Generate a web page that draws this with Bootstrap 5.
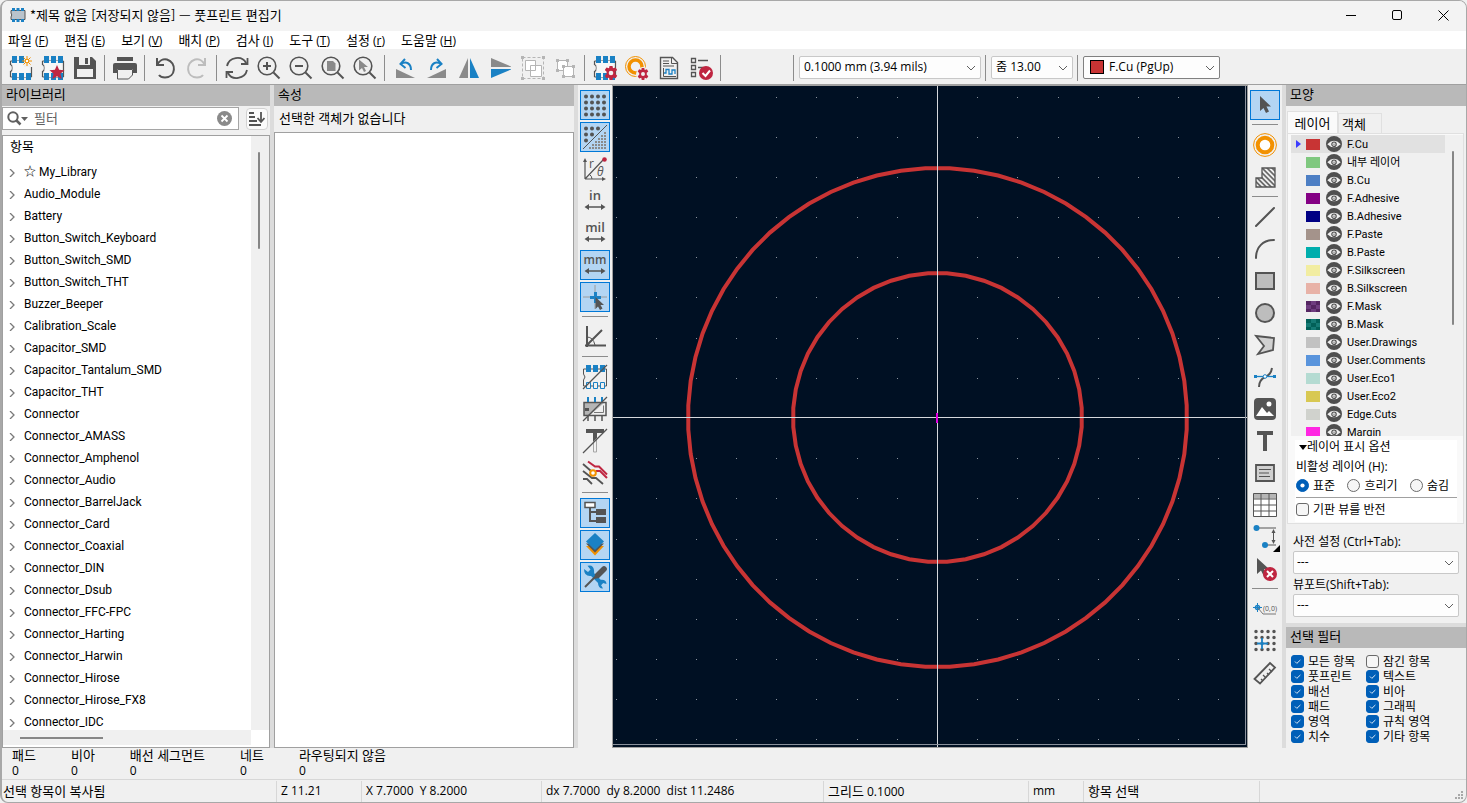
<!DOCTYPE html>
<html lang="ko">
<head>
<meta charset="utf-8">
<meta name="viewport" content="width=device-width, initial-scale=1">
<title>풋프린트 편집기</title>
<link href="https://cdn.jsdelivr.net/npm/bootstrap@5.3.0/dist/css/bootstrap.min.css" rel="stylesheet">
<style>
:root{--ui:"Open Sans","Noto Sans CJK KR",sans-serif;--narrow:Roboto,"Noto Sans CJK KR",sans-serif}
body{font:12px/18px var(--ui);color:#000;background:#f0f0f0}
.ko{font-size:13px}
.app-window{height:100vh;border:1px solid #a8a8a8;border-radius:8px;overflow:hidden;background:#f0f0f0;border-width:1px 1px 1px 2px}
.titlebar{height:30px;background:#f3f3f3;padding:0 0 2px 8px}
.titlebar h1{font:13px/20px "Noto Sans CJK KR",sans-serif;margin:0}
.win-btn{width:46px;height:28px;border:0;background:none;padding:0;line-height:0}
.menubar{height:18px;background:#fff;padding-left:6px;gap:16px}
.menubar .nav-link{padding:0;color:#000;font-size:12px;line-height:18px}
.menubar .nav-link u{text-underline-offset:1px}
svg.ic{width:24px;height:24px;display:block;overflow:visible}
.toolbar{height:36px;padding:2px 4px 0;gap:2px;border-bottom:1px solid #a0a0a0}
.tool{width:30px;height:30px;padding:2px;border:1px solid transparent;border-radius:0;flex:none;background:none}
.tool.active{background:#b3d5f3;border-color:#0078d7}
.vr-sep{width:6px;height:26px;flex:none;background:linear-gradient(#8c8c8c,#8c8c8c) 2px 0/1px 100% no-repeat}
.hr-sep{width:26px;height:6px;flex:none;margin:0 2px;background:linear-gradient(#8c8c8c,#8c8c8c) 0 2px/100% 1px no-repeat}
.tool-gap{max-width:63px}
.form-select.pick{font-family:var(--ui);font-size:12px;line-height:18px;height:23px;padding:0 22px 1px 4px;color:#000;background-color:#fdfdfd;border:1px solid #c8c8c8;border-radius:2px;background-position:right 4px center;background-size:10px 10px;background-image:url("data:image/svg+xml,%3csvg xmlns='http://www.w3.org/2000/svg' viewBox='0 0 10 10'%3e%3cpath fill='none' stroke='%23606060' d='M1 3l4 4 4-4'/%3e%3c/svg%3e")}
.form-select.pick-grid{width:182px}.form-select.pick-zoom{width:82px}
.form-select.pick-layer{width:137px;border-color:#808080;padding-left:25px}
.pick-swatch{position:absolute;left:7px;top:4px;width:14px;height:14px;background:#c83434;border:1px solid #000;pointer-events:none}
.panel-head{height:21px;background:#b9b9b9;font-size:13px;line-height:19px;padding-left:4px;margin:0;font-weight:400;flex:none}
.workspace{background:#f0f0f0;min-height:0}
.gutter{width:4px;background:#dcdcdc;flex:none}
.lib-panel{width:268px;flex:none}
.prop-panel{width:300px;flex:none}
.search-row{padding:1px 2px 5px 0;gap:7px}
.search-box{height:23px;border:1px solid #a5a5a5;background:#fff;padding:0 6px 0 4px}
.search-box input{border:0;outline:0;padding:0 0 2px 6px;font-size:13px;line-height:18px;min-width:0;background:none}
.search-box input::placeholder{color:#606060;opacity:1}
.clear-btn,.sort-btn{border:0;background:none;padding:0;line-height:0}
.sort-btn{width:22px;height:22px;background:#fbfbfb;border:1px solid #d2d2d2;border-radius:4px;padding:2px}
.tree{border:1px solid #a0a0a0;background:#fff;min-height:0;font-family:var(--narrow)}
.tree-title{padding:2px 0 5px 7px}
.tree ul{margin:0;padding:0;list-style:none}
.tree li{height:22px;line-height:22px;padding-left:6px}
.tree li svg{width:6px;height:8px;margin-right:9px}
.v-track{width:18px;background:#f0f0f0;padding:16px 0 0 7px;flex:none}
.v-thumb{width:2px;background:#868686;border-radius:1px}
.h-track{height:15px;background:#f0f0f0;padding:7px 0 0 17px;margin:0 18px 2px 0}
.h-thumb{width:83px;height:2px;background:#868686}
.prop-body{border:1px solid #a0a0a0;background:#fff}
.side-tools{width:34px;padding:5px 2px 0;gap:2px;flex:none;overflow:hidden}
.board{background:#001023;border:1px solid #a0a0a0;min-width:0}
.board>svg{position:absolute;inset:0;width:100%;height:100%}
.board::after{content:"";position:absolute;inset:0 1px 2px 0;border:1px solid #8a919c;border-width:0 1px 1px 0}
.app-panel{width:180px;flex:none}
.tabs-row{padding:6px 0 0 1px;height:27px}
.tabs-row .nav-link{border:1px solid #e0e0e0;border-bottom:0;border-radius:0;background:#f0f0f0;color:#000;font-size:13px;line-height:18px;padding:0 12px 0 0;width:44px;height:20px;margin-top:1px}
.tabs-row .nav-link.active{width:51px;height:22px;background:#fafafa;margin:-1px 0 0;padding:0}
.tab-page{border:1px solid #e0e0e0;margin:0 2px 0 1px;padding:1px 0 1px 3px;background:#f9f9f9}
.layer-list{height:301px;overflow:hidden;background:#f0f0f0;margin:0 0 4px 0;font:11px/17px var(--narrow)}
.layer-row{height:18px;padding-left:15px;gap:6px;position:relative}
.layer-row.current{background:#e1e1e1}
.layer-row.current::before{content:"";position:absolute;left:5px;top:5px;border:4px solid transparent;border-left:5px solid #3c3cff;border-right:0}
.swatch{width:14px;height:11px;flex:none;background:var(--c)}
.swatch.check{background:repeating-conic-gradient(var(--c) 0 25%,var(--d) 0 50%) 0 0/10px 8px}
.layer-row svg{width:16px;height:16px;flex:none}
.layer-row .txt{margin-left:-1px}
.opts{background:#fff;margin:0 6px 0 4px;padding:0 0 1px 1px}
.opts .line{height:1px;background:#a0a0a0;margin:4px 0 0}
.fold{line-height:14px;padding:0 0 2px 3px}
.form-check.mini{min-height:0;padding:0;margin:0;display:flex;align-items:center;gap:4px;line-height:15px}
.mini .form-check-input{float:none;margin:0;width:13px;height:13px;border-color:#6a6a6a;background-color:#f6f6f6;flex:none}
.mini .form-check-input[type=checkbox]{border-radius:3px}
.mini .form-check-input:checked{background-color:#005fb8;border-color:#005fb8}
.mini .form-check-input[type=checkbox]:checked{background-image:url("data:image/svg+xml,%3csvg xmlns='http://www.w3.org/2000/svg' viewBox='0 0 13 13'%3e%3cpath fill='none' stroke='%23fff' d='M3.5 6.5l2.2 2.2 4.2-4'/%3e%3c/svg%3e")}
.mini .form-check-input[type=radio]:checked{background-image:url("data:image/svg+xml,%3csvg xmlns='http://www.w3.org/2000/svg' viewBox='0 0 13 13'%3e%3ccircle cx='6.5' cy='6.5' r='2.5' fill='%23fff'/%3e%3c/svg%3e")}
.presets{padding:9px 7px 6px}
.presets .form-select{padding-left:3px}
.presets label{display:block;line-height:18px}
.presets label+select+label{padding-top:2px}
.strip{height:4px;background:#dcdcdc}
.filters{display:grid;grid-template-columns:75px 1fr;padding:6px 0 0 5px}
.counts{height:31px;padding:0 0 0 10px;gap:35px;line-height:15px}
.counts dd,.counts dt{margin:0;font-weight:400}
.counts dt{font-size:13px}
.statusbar{height:23px;border-top:1px solid #d7d7d7;padding-top:1px;line-height:20px}
.statusbar>div{border-left:1px solid #d7d7d7;padding-left:4px;white-space:pre;overflow:hidden}
.statusbar>div:first-child{border:0;padding-left:1px}
</style>
</head>
<body>
<svg width="0" height="0" class="position-absolute" aria-hidden="true">
<defs>
<symbol id="fp" viewBox="0 0 24 24"><path d="M1.5 5v3.500q2 .8 2 3.500t-2 3.500V21M22.500 5v16M1.500 5h21M1.500 21h21" fill="none" stroke="#545454" stroke-width="1.200"/><path d="M3.500 5h17v16h-17z" fill="#f7f7f7"/><path d="M3 0h5v7H3zM10 0h5v7h-5zM17 0h5v7h-5zM3 17h5v7H3zM10 17h5v7h-5zM17 17h5v7h-5z" fill="#1a81c4"/></symbol>
<symbol id="gear" viewBox="0 0 14 14"><path d="M5.500 0h3l.5 2.300 2.500-.9 1.700 2.600-1.800 1.600V8l1.800 1.700-1.700 2.600-2.500-.8-.5 2.500h-3L5 11.500l-2.500.8L.8 9.700 2.600 8V5.700L.8 4l1.700-2.600 2.500.9z" fill="#bf2641"/><circle cx="7" cy="7" r="2.300" fill="#f0f0f0"/></symbol>
<symbol id="eye" viewBox="0 0 16 16"><circle cx="8" cy="8" r="8" fill="#4f4f4f"/><path d="M1.300 8.200Q8 1.500 14.700 8.200 8 14.500 1.300 8.200z" fill="#f0f0f0"/><circle cx="8" cy="8.200" r="2.200" fill="#f0f0f0" stroke="#4f4f4f" stroke-width="1.200"/><circle cx="8" cy="8.200" r=".6" fill="#4f4f4f"/></symbol>
<symbol id="lens" viewBox="0 0 24 24"><circle cx="10" cy="10" r="8.800" fill="none" stroke="#545454" stroke-width="1.600"/><path d="M16.500 16.500l6 6" stroke="#545454" stroke-width="2"/></symbol>
<symbol id="arrows" viewBox="0 0 24 6"><path d="M4 3h16" stroke="#545454" stroke-width="1.500"/><path d="M6 0v6L1.500 3zM18 0v6l4.500-3z" fill="#545454"/></symbol>
<pattern id="hatch" width="3.500" height="3.500" patternUnits="userSpaceOnUse" patternTransform="rotate(-45)"><path d="M.8 0v4" stroke="#545454" stroke-width="1.500"/></pattern>
</defs>
</svg>

<div class="app-window d-flex flex-column">
<header class="titlebar d-flex align-items-center flex-shrink-0">
  <svg width="16" height="14" viewBox="0 0 16 14"><path d="M1 2.500h14v9H1V9q1.500-2 0-4z" fill="#b9c3cc" stroke="#545454"/><path d="M2 0h3v3H2zM6.500 0h3v3h-3zM11 0h3v3h-3zM2 11h3v3H2zM6.500 11h3v3h-3zM11 11h3v3h-3z" fill="#1a81c4"/></svg>
  <h1 class="ms-1">*제목 없음 [저장되지 않음] — 풋프린트 편집기</h1>
  <div class="ms-auto d-flex">
    <button class="win-btn" aria-label="최소화"><svg width="11" height="11"><path d="M0 5.500h10" stroke="#000"/></svg></button>
    <button class="win-btn" aria-label="최대화"><svg width="11" height="11"><rect x=".5" y=".5" width="9" height="9" rx="1.500" fill="none" stroke="#000"/></svg></button>
    <button class="win-btn" aria-label="닫기"><svg width="11" height="11"><path d="M.5.5l10 10M10.500.5l-10 10" stroke="#000"/></svg></button>
  </div>
</header>
<nav class="menubar nav flex-nowrap flex-shrink-0">
  <a class="nav-link" href="#"><span class="ko">파일</span> (<u>F</u>)</a><a class="nav-link" href="#"><span class="ko">편집</span> (<u>E</u>)</a><a class="nav-link" href="#"><span class="ko">보기</span> (<u>V</u>)</a><a class="nav-link" href="#"><span class="ko">배치</span> (<u>P</u>)</a><a class="nav-link" href="#"><span class="ko">검사</span> (<u>I</u>)</a><a class="nav-link" href="#"><span class="ko">도구</span> (<u>T</u>)</a><a class="nav-link" href="#"><span class="ko">설정</span> (<u>r</u>)</a><a class="nav-link" href="#"><span class="ko">도움말</span> (<u>H</u>)</a>
</nav>

<div class="toolbar d-flex align-items-center flex-shrink-0" role="toolbar">
  <button class="btn tool" aria-label="새 풋프린트"><svg class="ic" viewBox="0 0 24 24"><use href="#fp"/><path d="M15 0h9v11h-9z" fill="#f0f0f0"/><path d="M18 0v10M13 5h10M14.500 1.500l7 7M21.500 1.500l-7 7" stroke="#f29100"/><circle cx="18" cy="5" r="1.800" fill="#fff" stroke="#f29100"/></svg></button>
  <button class="btn tool" aria-label="풋프린트 마법사"><svg class="ic" viewBox="0 0 24 24"><use href="#fp"/><path d="M16 9l2.100 4.800 5.400.5-4.100 3.500 1.300 5.200-4.700-2.800-4.700 2.800 1.300-5.200-4.100-3.500 5.400-.5z" fill="#bf2641"/></svg></button>
  <button class="btn tool" aria-label="저장"><svg class="ic" viewBox="0 0 24 24"><path d="M1 1h18l4 4v18H1z" fill="#545454"/><path d="M6 1h11v8H6zM4 13h16v8H4z" fill="#f0f0f0"/><path d="M12 2h3v6h-3z" fill="#545454"/></svg></button>
  <i class="vr-sep"></i>
  <button class="btn tool" aria-label="인쇄"><svg class="ic" viewBox="0 0 24 24"><path d="M4 1h16v4H4zM2 7h20q2 0 2 2v8h-4v-4H4v4H0V9q0-2 2-2z" fill="#545454"/><path d="M4.500 13.500h15V19l-4 4h-11z" fill="#f0f0f0" stroke="#545454"/></svg></button>
  <i class="vr-sep"></i>
  <button class="btn tool" aria-label="실행 취소"><svg class="ic" viewBox="0 0 24 24"><path d="M4 2v7h7M4 9C6 5 10 2.500 14 3.500c10 3 9 18-2 18-3 0-5-1-6-2.500" fill="none" stroke="#545454" stroke-width="2"/></svg></button>
  <button class="btn tool" aria-label="다시 실행"><svg class="ic" viewBox="0 0 24 24"><path d="M20 2v7h-7M20 9C18 5 14 2.500 10 3.500c-10 3-9 18 2 18 3 0 5-1 6-2.500" fill="none" stroke="#bdbdbd" stroke-width="2"/></svg></button>
  <i class="vr-sep"></i>
  <button class="btn tool" aria-label="새로 고침"><svg class="ic" viewBox="0 0 24 24"><path d="M2 10C4 1 17-1 21 7M22.500 2v6H16M22 14c-2 9-15 11-19 3M1.500 22v-6H8" fill="none" stroke="#545454" stroke-width="1.800"/></svg></button>
  <button class="btn tool" aria-label="확대"><svg class="ic" viewBox="0 0 24 24"><use href="#lens"/><path d="M10 6v8M6 10h8" stroke="#545454" stroke-width="2"/></svg></button>
  <button class="btn tool" aria-label="축소"><svg class="ic" viewBox="0 0 24 24"><use href="#lens"/><path d="M6 10h8" stroke="#545454" stroke-width="2"/></svg></button>
  <button class="btn tool" aria-label="맞춤 확대"><svg class="ic" viewBox="0 0 24 24"><use href="#lens"/><path d="M6 5h6l2.500 2.500V15H6z" fill="#8a8a8a"/></svg></button>
  <button class="btn tool" aria-label="선택 영역 확대"><svg class="ic" viewBox="0 0 24 24"><use href="#lens"/><path d="M6 3.500v11l3-2.500 2 4 2-1-2-4h4z" fill="#8a8a8a"/></svg></button>
  <i class="vr-sep"></i>
  <button class="btn tool" aria-label="반시계 방향 회전"><svg class="ic" viewBox="0 0 24 24"><path d="M3 13v9h19z" fill="#8a8a8a"/><path d="M8 8c5-3 10-1 10 6" fill="none" stroke="#1a81c4" stroke-width="2"/><path d="M12 3L7.500 8l5 4" fill="none" stroke="#1a81c4" stroke-width="2"/></svg></button>
  <button class="btn tool" aria-label="시계 방향 회전"><svg class="ic" viewBox="0 0 24 24"><path d="M21 13v9H2z" fill="#8a8a8a"/><path d="M16 8c-5-3-10-1-10 6" fill="none" stroke="#1a81c4" stroke-width="2"/><path d="M12 3l4.500 5-5 4" fill="none" stroke="#1a81c4" stroke-width="2"/></svg></button>
  <button class="btn tool" aria-label="수평 뒤집기"><svg class="ic" viewBox="0 0 24 24"><path d="M11 2v20H2z" fill="#8a8a8a"/><path d="M13 2v20h9z" fill="#1a81c4"/></svg></button>
  <button class="btn tool" aria-label="수직 뒤집기"><svg class="ic" viewBox="0 0 24 24"><path d="M2 2l20 8.500v.5H2z" fill="#8a8a8a"/><path d="M2 22l20-8.500V13H2z" fill="#1a81c4"/></svg></button>
  <button class="btn tool" aria-label="그룹"><svg class="ic" viewBox="0 0 24 24"><rect x="1.500" y="1.500" width="21" height="21" fill="none" stroke="#b5b5b5" stroke-dasharray="3 2"/><path d="M0 0h3v3H0zM21 0h3v3h-3zM0 21h3v3H0zM21 21h3v3h-3z" fill="#b5b5b5"/><path d="M4.500 4.500h10v10h-10zM9.500 9.500h11v11h-11z" fill="#fff" stroke="#b5b5b5"/></svg></button>
  <button class="btn tool" aria-label="그룹 해제"><svg class="ic" viewBox="0 0 24 24"><path d="M4.500 4.500h10v10h-10z" fill="#fff" stroke="#b5b5b5"/><path d="M10.500 10.500h10v10h-10z" fill="#fff" stroke="#b5b5b5"/><path d="M3 3h3v3H3zM13 3h3v3h-3zM3 13h3v3H3zM9 9h3v3H9zM19 9h3v3h-3zM9 19h3v3H9zM19 19h3v3h-3z" fill="#b5b5b5"/></svg></button>
  <i class="vr-sep"></i>
  <button class="btn tool" aria-label="풋프린트 속성"><svg class="ic" viewBox="0 0 24 24"><use href="#fp"/><use href="#gear" x="11" y="10" width="14" height="14"/></svg></button>
  <button class="btn tool" aria-label="기본 패드 속성"><svg class="ic" viewBox="0 0 24 24"><circle cx="10.500" cy="10.500" r="10" fill="none" stroke="#f29100"/><circle cx="10.500" cy="10.500" r="6.500" fill="none" stroke="#f29100" stroke-width="3.500"/><circle cx="18" cy="18" r="7" fill="#f0f0f0"/><use href="#gear" x="12" y="12" width="12" height="12"/></svg></button>
  <button class="btn tool" aria-label="데이터시트"><svg class="ic" viewBox="0 0 24 24"><path d="M3.500 1.500h12l5 5v16h-17z" fill="none" stroke="#545454" stroke-width="1.400"/><path d="M14.500 1.500v6h6M6 5h6M6 7.500h6M6 10h11" fill="none" stroke="#545454"/><path d="M6.500 12v8.500H19" fill="none" stroke="#545454"/><path d="M7 17h2v-3.500h3V18h3v-4h3v4" fill="none" stroke="#1a81c4" stroke-width="1.300"/></svg></button>
  <button class="btn tool" aria-label="풋프린트 검사기"><svg class="ic" viewBox="0 0 24 24"><path d="M2.500 2.500h4v4h-4zM2.500 9.500h4v4h-4zM2.500 16.500h4v4h-4zM9 4.500h10M9 11.500h5" fill="none" stroke="#545454" stroke-width="1.300"/><circle cx="17" cy="17" r="7" fill="#bf2641"/><path d="M13.500 17l3 3 4.500-5.500" fill="none" stroke="#fff" stroke-width="2"/></svg></button>
  <i class="vr-sep"></i>
  <i class="tool-gap flex-grow-1"></i>
  <i class="vr-sep"></i>
  <select class="form-select pick pick-grid" aria-label="그리드"><option>0.1000 mm (3.94 mils)</option></select>
  <i class="vr-sep"></i>
  <select class="form-select pick pick-zoom" aria-label="줌"><option>줌 13.00</option></select>
  <i class="vr-sep"></i>
  <div class="position-relative"><select class="form-select pick pick-layer" aria-label="레이어"><option>F.Cu (PgUp)</option></select><span class="pick-swatch"></span></div>
</div>

<main class="workspace d-flex flex-grow-1">
  <section class="lib-panel d-flex flex-column">
    <h2 class="panel-head">라이브러리</h2>
    <div class="search-row d-flex align-items-center flex-shrink-0">
      <div class="search-box d-flex align-items-center flex-grow-1">
        <svg width="21" height="16" viewBox="0 0 21 16"><circle cx="6" cy="6" r="4.700" fill="none" stroke="#606060" stroke-width="2"/><path d="M9.500 9.500l4 4" stroke="#606060" stroke-width="2.500"/><path d="M14 6h7l-3.500 4z" fill="#606060"/></svg>
        <input class="flex-grow-1" type="text" placeholder="필터" aria-label="필터">
        <button class="clear-btn" aria-label="지우기"><svg width="15" height="15" viewBox="0 0 15 15"><circle cx="7.500" cy="7.500" r="7.500" fill="#8a8a8a"/><path d="M4.500 4.500l6 6M10.500 4.500l-6 6" stroke="#fff" stroke-width="1.800"/></svg></button>
      </div>
      <button class="sort-btn" aria-label="정렬"><svg width="16" height="16" viewBox="0 0 16 16"><path d="M0 2h5M0 6h6M0 10h8M0 14h12" stroke="#545454" stroke-width="1.800"/><path d="M12 1v9M8.500 7l3.500 4 3.500-4" fill="none" stroke="#545454" stroke-width="1.800"/></svg></button>
    </div>
    <div class="tree d-flex flex-column flex-grow-1">
      <div class="d-flex flex-grow-1 overflow-hidden">
        <div class="flex-grow-1 overflow-hidden">
          <div class="ko tree-title">항목</div>
          <ul id="libs"></ul>
        </div>
        <div class="v-track"><div class="v-thumb" style="height:97px"></div></div>
      </div>
      <div class="h-track flex-shrink-0"><div class="h-thumb"></div></div>
    </div>
  </section>
  <div class="gutter"></div>
  <section class="prop-panel d-flex flex-column">
    <h2 class="panel-head">속성</h2>
    <p class="ko m-0 flex-shrink-0" style="padding:3px 5px 5px">선택한 객체가 없습니다</p>
    <div class="prop-body flex-grow-1"></div>
  </section>
  <div class="gutter"></div>
  <div class="side-tools d-flex flex-column" role="toolbar">
    <button class="btn tool active" aria-label="그리드 표시"><svg class="ic" viewBox="0 0 24 24"><path d="M3 3.500h20M3 9.500h20M3 15.500h20M3 21.500h20" stroke="#545454" stroke-width="4" stroke-linecap="round" stroke-dasharray="0 6"/></svg></button>
    <button class="btn tool active" aria-label="그리드 재정의"><svg class="ic" viewBox="0 0 24 24"><path d="M3 3.500h15M3 9.500h8M3 15.500h3" stroke="#545454" stroke-width="4" stroke-linecap="round" stroke-dasharray="0 6"/><path d="M0 24L24 0" stroke="#545454"/><path d="M21 8h2M18 11h5M15 14h8M12 17h11M9 20h14M6 23h17" stroke="#8a8a8a" stroke-width="2" stroke-dasharray="2 1"/></svg></button>
    <button class="btn tool" aria-label="극좌표"><svg class="ic" viewBox="0 0 24 24"><path d="M2 22V4M2 22h18M2 22L20 3" fill="none" stroke="#545454" stroke-width="1.200"/><path d="M0 5h4L2 1zM19 20v4l4-2z" fill="#545454"/><path d="M6 17q3 2 3 5" fill="none" stroke="#545454"/><circle cx="21.500" cy="2.500" r="2.300" fill="#bf2641"/><text x="6" y="11" font-size="12" font-family="Open Sans" fill="#545454">r</text><text x="14" y="19" font-size="12" font-style="italic" font-family="Open Sans" fill="#545454">θ</text></svg></button>
    <button class="btn tool" aria-label="인치"><svg class="ic" viewBox="0 0 24 24"><text x="12" y="11" text-anchor="middle" font-size="13" font-family="Open Sans" font-weight="600" fill="#545454">in</text><use href="#arrows" y="15" width="24" height="6"/></svg></button>
    <button class="btn tool" aria-label="밀"><svg class="ic" viewBox="0 0 24 24"><text x="12" y="11" text-anchor="middle" font-size="13" font-family="Open Sans" font-weight="600" fill="#545454">mil</text><use href="#arrows" y="15" width="24" height="6"/></svg></button>
    <button class="btn tool active" aria-label="밀리미터"><svg class="ic" viewBox="0 0 24 24"><text x="12" y="11" text-anchor="middle" font-size="12" font-family="Open Sans" font-weight="600" fill="#545454">mm</text><use href="#arrows" y="15" width="24" height="6"/></svg></button>
    <button class="btn tool active" aria-label="전체 십자선"><svg class="ic" viewBox="0 0 24 24"><path d="M12 0v24M0 12h24" stroke="#9c9c9c"/><path d="M12.500 7v11M7 12.500h11" stroke="#1a81c4" stroke-width="3"/><path d="M12.500 12v12l2.500-2.500 2 3.500 2.500-1.500-2-3.500H21z" fill="#545454"/></svg></button>
    <i class="hr-sep"></i>
    <button class="btn tool" aria-label="각도 제한"><svg class="ic" viewBox="0 0 24 24"><path d="M4 1v21M2 20.500h21M4 20L19 5" stroke="#545454" stroke-width="2"/><path d="M4 12q6 0 8 8" fill="none" stroke="#545454"/></svg></button>
    <i class="hr-sep"></i>
    <button class="btn tool" aria-label="패드 스케치"><svg class="ic" viewBox="0 0 24 24"><path d="M.5 4v5q3 3 0 6v6h23V4z" fill="none" stroke="#545454"/><path d="M3 0h5v7H3zM10 0h5v7h-5zM17 0h5v7h-5z" fill="#1a81c4"/><path d="M3.500 17.500h4v6h-4zM10.500 17.500h4v6h-4zM17.500 17.500h4v6h-4z" fill="#f0f0f0" stroke="#1a81c4"/><path d="M0 24L24 0" stroke="#545454" stroke-width="1.200"/></svg></button>
    <button class="btn tool" aria-label="그래픽 스케치"><svg class="ic" viewBox="0 0 24 24"><path d="M1 6h20L7 18H1z" fill="#b5b5b5"/><path d="M1 5.500h22v13H1z" fill="none" stroke="#545454" stroke-width="1.500"/><path d="M5 0v5M12 0v5M19 0v5" stroke="#1a81c4" stroke-width="2"/><path d="M5 19v5M12 19v5M19 19v5" stroke="#545454" stroke-width="1.500"/><path d="M20.500 8.500v7H11" fill="none" stroke="#777"/><path d="M2 11h4v3H2z" fill="#545454"/><path d="M0 24L24 0" stroke="#545454" stroke-width="1.200"/></svg></button>
    <button class="btn tool" aria-label="문자 스케치"><svg class="ic" viewBox="0 0 24 24"><path d="M3 0h18v4h-7v5l-4 4V4H3z" fill="#545454"/><path d="M10.500 14v9h3V11" fill="none" stroke="#a5a5a5"/><path d="M0 24L24 0" stroke="#545454" stroke-width="1.200"/></svg></button>
    <button class="btn tool" aria-label="고대비"><svg class="ic" viewBox="0 0 24 24"><path d="M5 .5l7 5h4l8 8M13 10h4l7 7" fill="none" stroke="#bf2641" stroke-width="2"/><path d="M0 3l8 7M0 10l9 7h4l7 6M0 18h4l5 5" fill="none" stroke="#545454" stroke-width="1.800"/><circle cx="10" cy="12" r="2.800" fill="#fff" stroke="#f29100" stroke-width="2"/></svg></button>
    <i class="hr-sep"></i>
    <button class="btn tool active" aria-label="라이브러리 트리"><svg class="ic" viewBox="0 0 24 24"><path d="M7 6v14h7M7 11h7" fill="none" stroke="#545454" stroke-width="2"/><path d="M2 1.500h10v5H2z" fill="#fff" stroke="#545454" stroke-width="1.500"/><path d="M13 8h10v6H13zM13 16h10v6H13z" fill="#545454"/></svg></button>
    <button class="btn tool active" aria-label="레이어 관리자"><svg class="ic" viewBox="0 0 24 24"><path d="M3 13l9 9.500 9-9.500z" fill="#f29100"/><path d="M3 10.500l9 9 9-9z" fill="#545454"/><path d="M12 0l9 8.500-9 8.500-9-8.500z" fill="#1a81c4"/></svg></button>
    <button class="btn tool active" aria-label="속성 관리자"><svg class="ic" viewBox="0 0 24 24"><path d="M7 7l12 12" stroke="#1a81c4" stroke-width="4"/><path d="M1 4l4 3 2.500-2.500L4.500.8Q10-1 11 5t-4 6Q1 11 1 4z" fill="#1a81c4"/><path d="M17 15q6-1 6.500 4L20 18l-2 2 2 3.500q-5 0-5-6z" fill="#1a81c4"/><path d="M2 22l10-10" stroke="#545454" stroke-width="2"/><path d="M12 9l7-7q2-2 4 0t0 4l-7 7-5 1z" fill="#545454"/></svg></button>
  </div>
  <div class="board position-relative flex-grow-1">
    <svg aria-label="풋프린트 캔버스"><svg x="50%" y="50%" overflow="visible"><g transform="translate(7 1)">
      <g id="dots" fill="#8a919c" shape-rendering="crispEdges"></g>
      <g id="rings" fill="none" stroke="#c83434" stroke-width="4"></g>
      <path d="M0-9999V9999M-9999 0H9999" stroke="#d5d8dc" shape-rendering="crispEdges"/>
      <path d="M-1-5h2V5h-2z" fill="#e000e0" shape-rendering="crispEdges"/>
    </g></svg></svg>
  </div>
  <div class="side-tools d-flex flex-column" role="toolbar">
    <button class="btn tool active" aria-label="선택"><svg class="ic" viewBox="0 0 24 24"><path d="M7 3v15l3.500-3 2.500 5 3-1.500-2.500-5H18z" fill="#545454"/></svg></button>
    <i class="hr-sep"></i>
    <button class="btn tool" aria-label="패드 추가"><svg class="ic" viewBox="0 0 24 24"><circle cx="12" cy="12" r="11.400" fill="none" stroke="#f29100"/><circle cx="12" cy="12" r="7.300" fill="#fff" stroke="#f29100" stroke-width="4"/></svg></button>
    <button class="btn tool" aria-label="규칙 영역"><svg class="ic" viewBox="0 0 24 24"><path d="M9 3h13v19H3v-9h6z" fill="url(#hatch)" stroke="#545454" stroke-width="1.300"/></svg></button>
    <i class="hr-sep"></i>
    <button class="btn tool" aria-label="선"><svg class="ic" viewBox="0 0 24 24"><path d="M3 21L21 3" stroke="#545454" stroke-width="2" stroke-linecap="round"/></svg></button>
    <button class="btn tool" aria-label="호"><svg class="ic" viewBox="0 0 24 24"><path d="M3 21C3 10 10 3 21 3" fill="none" stroke="#545454" stroke-width="2" stroke-linecap="round"/></svg></button>
    <button class="btn tool" aria-label="사각형"><svg class="ic" viewBox="0 0 24 24"><path d="M3 4h18v16H3z" fill="#bdbdbd" stroke="#545454" stroke-width="2"/></svg></button>
    <button class="btn tool" aria-label="원"><svg class="ic" viewBox="0 0 24 24"><circle cx="12" cy="12" r="9" fill="#bdbdbd" stroke="#545454" stroke-width="2"/></svg></button>
    <button class="btn tool" aria-label="다각형"><svg class="ic" viewBox="0 0 24 24"><path d="M3 3l18 2-1 12-15 4 6-8z" fill="#d0d0d0" stroke="#545454" stroke-width="1.800"/></svg></button>
    <button class="btn tool" aria-label="베지어"><svg class="ic" viewBox="0 0 24 24"><path d="M6 22q0-7 6-10 6-2 7-9" fill="none" stroke="#545454" stroke-width="2"/><path d="M2 11.500h20" stroke="#1a81c4" stroke-width="1.300"/><path d="M1 10h3v3H1zM20 10h3v3h-3z" fill="#1a81c4"/><circle cx="12" cy="11.500" r="1.800" fill="#fff" stroke="#1a81c4"/></svg></button>
    <button class="btn tool" aria-label="이미지"><svg class="ic" viewBox="0 0 24 24"><rect x="1" y="1" width="22" height="22" rx="4" fill="#545454"/><path d="M3 19l6-9 5 6 2-2 5 5z" fill="#fff"/><circle cx="16" cy="7" r="2.500" fill="#fff"/></svg></button>
    <button class="btn tool" aria-label="문자"><svg class="ic" viewBox="0 0 24 24"><path d="M4 2h16v4h-6v16h-4V6H4z" fill="#545454"/></svg></button>
    <button class="btn tool" aria-label="텍스트 상자"><svg class="ic" viewBox="0 0 24 24"><path d="M3 4h18v16H3z" fill="#d0d0d0" stroke="#545454" stroke-width="1.800"/><path d="M6 8.500h12M6 12h10M6 15.500h11" stroke="#545454"/></svg></button>
    <button class="btn tool" aria-label="표"><svg class="ic" viewBox="0 0 24 24"><path d="M.5.5h23v23H.5z" fill="#fff"/><path d="M.5.5h23v5H.5z" fill="#b5b5b5"/><path d="M.5.5h23v23H.5zM.5 6h23M.5 12h23M.5 18h23M8 .5v23M16 .5v23" fill="none" stroke="#545454"/></svg></button>
    <button class="btn tool" aria-label="치수"><svg class="ic" viewBox="0 0 24 24"><path d="M4 3h19M12 20h11" stroke="#545454"/><path d="M20.500 5v13" stroke="#545454"/><path d="M18.500 8l2-4 2 4zM18.500 15l2 4 2-4z" fill="#545454"/><circle cx="3.500" cy="3" r="3" fill="#1a81c4"/><circle cx="12" cy="20" r="3" fill="#1a81c4"/><path d="M27 20v7h-7z" fill="#000"/></svg></button>
    <button class="btn tool" aria-label="삭제"><svg class="ic" viewBox="0 0 24 24"><path d="M4 1v16l4-3.500 3 6 3-1.500-3-6h5z" fill="#545454"/><circle cx="17" cy="17" r="7" fill="#bf2641"/><path d="M14 14l6 6M20 14l-6 6" stroke="#fff" stroke-width="2"/></svg></button>
    <i class="hr-sep"></i>
    <button class="btn tool" aria-label="원점"><svg class="ic" viewBox="0 0 24 24"><path d="M4.500 6v9M0 10.500h9" stroke="#1a81c4"/><circle cx="4.500" cy="10.500" r="2" fill="none" stroke="#1a81c4" stroke-width="1.500"/><path d="M5 11l5 6h13" fill="none" stroke="#777"/><text x="10" y="14" font-size="7" font-family="Open Sans" fill="#545454">(0,0)</text></svg></button>
    <button class="btn tool" aria-label="그리드 원점"><svg class="ic" viewBox="0 0 24 24"><path d="M3 2.500h20M3 8.500h20M3 14.500h20M3 20.500h20" stroke="#545454" stroke-width="3.500" stroke-linecap="round" stroke-dasharray="0 6"/><path d="M9 9v11M4 14.500h11" stroke="#1a81c4" stroke-width="1.800"/></svg></button>
    <button class="btn tool" aria-label="측정"><svg class="ic" viewBox="0 0 24 24"><path d="M1.500 18L17 2l5 4.500L7 22.500z" fill="none" stroke="#545454" stroke-width="1.800"/><path d="M10 20l-2-2M13 17l-3-3M16 14l-2-2M19 11l-3-3" stroke="#545454" stroke-width="1.300"/></svg></button>
  </div>
  <div class="gutter"></div>
  <aside class="app-panel d-flex flex-column">
    <h2 class="panel-head">모양</h2>
    <div class="nav tabs-row flex-shrink-0"><button class="nav-link active">레이어</button><button class="nav-link">객체</button></div>
    <div class="tab-page flex-shrink-0">
      <div class="layer-list d-flex"><div class="flex-grow-1" id="layers"></div><div class="v-track"><div class="v-thumb" style="height:174px"></div></div></div>
      <div class="opts">
        <div class="fold"><svg width="8" height="5"><path d="M0 0h8L4 5z"/></svg><span>레이어 표시 옵션</span></div>
        <div style="line-height:22px">비활성 레이어 (H):</div>
        <div class="d-flex justify-content-between pe-2">
          <div class="form-check mini"><input class="form-check-input" type="radio" name="inact" id="r1" checked><label for="r1">표준</label></div>
          <div class="form-check mini"><input class="form-check-input" type="radio" name="inact" id="r2"><label for="r2">흐리기</label></div>
          <div class="form-check mini"><input class="form-check-input" type="radio" name="inact" id="r3"><label for="r3">숨김</label></div>
        </div>
        <div class="line"></div>
        <div class="form-check mini py-1"><input class="form-check-input" type="checkbox" id="flip"><label for="flip">기판 뷰를 반전</label></div>
      </div>
    </div>
    <div class="presets flex-shrink-0">
      <label for="ps">사전 설정 (Ctrl+Tab):</label><select class="form-select pick" id="ps"><option>---</option></select>
      <label for="vp">뷰포트(Shift+Tab):</label><select class="form-select pick" id="vp"><option>---</option></select>
    </div>
    <div class="strip"></div>
    <h2 class="panel-head">선택 필터</h2>
    <div class="filters" id="filters"></div>
  </aside>
</main>

<dl class="counts d-flex m-0 flex-shrink-0">
  <div><dt>패드</dt><dd>0</dd></div><div><dt>비아</dt><dd>0</dd></div><div><dt>배선 세그먼트</dt><dd>0</dd></div><div><dt>네트</dt><dd>0</dd></div><div><dt>라우팅되지 않음</dt><dd>0</dd></div>
</dl>
<footer class="statusbar d-flex flex-shrink-0 position-relative">
  <div class="ko" style="width:274px">선택 항목이 복사됨</div><div style="width:85px">Z 11.21</div><div style="width:180px">X 7.7000  Y 8.2000</div><div style="width:282px">dx 7.7000  dy 8.2000  dist 11.2486</div><div style="width:205px"><span class="ko">그리드</span> 0.1000</div><div style="width:55px">mm</div><div class="ko" style="width:176px">항목 선택</div><div class="flex-grow-1"></div>
  <svg class="position-absolute bottom-0 end-0" width="11" height="11"><path d="M6 0h2v2H6zM3 3h2v2H3zM6 3h2v2H6zM0 6h2v2H0zM3 6h2v2H3zM6 6h2v2H6z" fill="#a8a8a8"/></svg>
</footer>
</div>

<script src="https://cdn.jsdelivr.net/npm/bootstrap@5.3.0/dist/js/bootstrap.bundle.min.js"></script>
<script>
const libs = ['☆ My_Library','Audio_Module','Battery','Button_Switch_Keyboard','Button_Switch_SMD','Button_Switch_THT','Buzzer_Beeper','Calibration_Scale','Capacitor_SMD','Capacitor_Tantalum_SMD','Capacitor_THT','Connector','Connector_AMASS','Connector_Amphenol','Connector_Audio','Connector_BarrelJack','Connector_Card','Connector_Coaxial','Connector_DIN','Connector_Dsub','Connector_FFC-FPC','Connector_Harting','Connector_Harwin','Connector_Hirose','Connector_Hirose_FX8','Connector_IDC'];
document.getElementById('libs').innerHTML = libs.map(n => `<li><svg viewBox="0 0 6 8"><path d="M1 0l4 4-4 4" fill="none" stroke="#7a7a7a" stroke-width="1.300"/></svg>${n}</li>`).join('');

const layers = [['F.Cu','#c83434'],['내부 레이어','#7fc87f'],['B.Cu','#4d7fc4'],['F.Adhesive','#840084'],['B.Adhesive','#000084'],['F.Paste','#a4938b'],['B.Paste','#00aead'],['F.Silkscreen','#f2eda1'],['B.Silkscreen','#e8b2a7'],['F.Mask','#6f3d80','#552662'],['B.Mask','#157a74','#026058'],['User.Drawings','#c2c2c2'],['User.Comments','#5994dc'],['User.Eco1','#b4dbd2'],['User.Eco2','#d8c852'],['Edge.Cuts','#d0d2cd'],['Margin','#ff26e2']];
document.getElementById('layers').innerHTML = layers.map(([n, c, d], i) => `<div class="layer-row d-flex align-items-center${i ? '' : ' current'}"><span class="swatch${d ? ' check' : ''}" style="--c:${c};--d:${d || c}"></span><svg><use href="#eye"/></svg><span class="txt">${n}</span></div>`).join('');

const filters = [['모든 항목',1],['잠긴 항목',0],['풋프린트',1],['텍스트',1],['배선',1],['비아',1],['패드',1],['그래픽',1],['영역',1],['규칙 영역',1],['치수',1],['기타 항목',1]];
document.getElementById('filters').innerHTML = filters.map(([n, on], i) => `<div class="form-check mini"><input class="form-check-input" type="checkbox" id="f${i}"${on ? ' checked' : ''}><label for="f${i}">${n}</label></div>`).join('');

// grid dots every 40.17 units around the origin
let dots = '';
for (let i = -30; i <= 30; i++) for (let j = -20; j <= 20; j++)
  if (i && j) dots += `<rect x="${Math.round(i * 40.17)}" y="${Math.round(j * 40.17)}" width="1" height="1"/>`;
document.getElementById('dots').innerHTML = dots;

// circles are drawn as segmented polygons
const ring = (r, n) => '<polygon points="' + Array.from({length: n}, (_, k) => {
  const a = (k + .5) * 2 * Math.PI / n;
  return (r * Math.sin(a) + .5).toFixed(1) + ',' + (r * Math.cos(a)).toFixed(1);
}).join(' ') + '"/>';
document.getElementById('rings').innerHTML = ring(249.5, 64) + ring(144.5, 48);
</script>
</body>
</html>
